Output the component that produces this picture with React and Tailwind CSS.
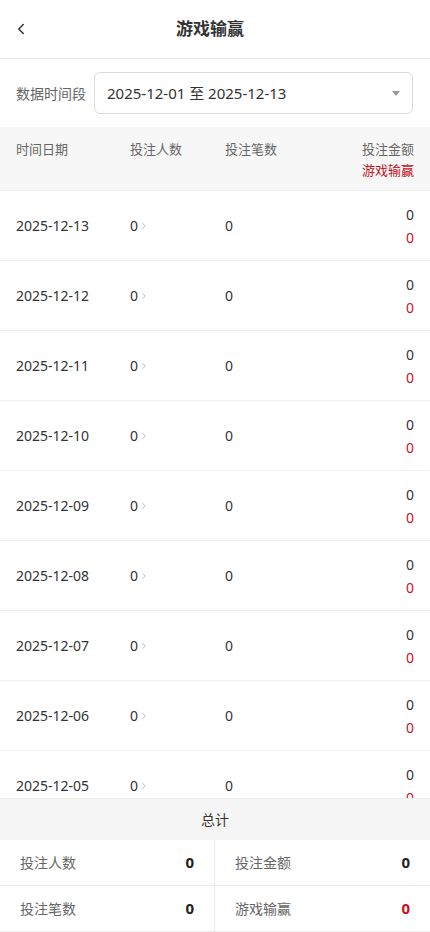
import { ChevronLeft, ChevronRight } from "lucide-react";

const days = [
  "2025-12-13",
  "2025-12-12",
  "2025-12-11",
  "2025-12-10",
  "2025-12-09",
  "2025-12-08",
  "2025-12-07",
  "2025-12-06",
  "2025-12-05",
  "2025-12-04",
];

function TotalCell({ label, value, red, left }) {
  return (
    <div
      className={`flex items-center justify-between h-[46px] px-5 border-b border-[#ececec] ${
        left ? "border-r" : ""
      }`}
    >
      <span className="text-[14px] text-[#666]">{label}</span>
      <span
        className={`text-[15px] font-bold ${red ? "text-[#c8101e]" : "text-[#222]"}`}
      >
        {value}
      </span>
    </div>
  );
}

export default function App() {
  return (
    <div
      className="h-[932px] w-full flex flex-col bg-white overflow-hidden"
      style={{ fontFamily: '"Noto Sans", "Noto Sans CJK SC", sans-serif' }}
    >
      {/* Header */}
      <div className="relative h-[59px] shrink-0 flex items-center justify-center pr-[10px] border-b border-[#ebebeb]">
        <ChevronLeft
          className="absolute left-[12px] top-[20px] text-[#333]"
          size={18}
          strokeWidth={2}
        />
        <h1 className="text-[17px] font-bold text-[#333]">游戏输赢</h1>
      </div>

      {/* Filter */}
      <div className="shrink-0 flex items-center h-[68px] pl-4 pr-[17px]">
        <span className="text-[14px] text-[#666] w-[78px] shrink-0">数据时间段</span>
        <div className="flex-1 h-[42px] flex items-center justify-between pl-[12px] pr-[12px] border border-[#dcdcdc] rounded-[6px]">
          <span className="text-[15px] text-[#333]">2025-12-01 至 2025-12-13</span>
          <span className="w-0 h-0 border-l-[4px] border-r-[4px] border-t-[5px] border-l-transparent border-r-transparent border-t-[#999]" />
        </div>
      </div>

      {/* Table header */}
      <div className="shrink-0 h-[64px] bg-[#f7f7f7] flex items-start px-4 pt-[12px] text-[13px] leading-[21px] text-[#666] border-b border-[#eeeeee]">
        <div className="w-[114px]">时间日期</div>
        <div className="w-[95px]">投注人数</div>
        <div className="flex-1">投注笔数</div>
        <div className="text-right">
          <div>投注金额</div>
          <div className="text-[#c8101e]">游戏输赢</div>
        </div>
      </div>

      {/* Rows */}
      <div className="flex-1 overflow-hidden">
        {days.map((d) => (
          <div
            key={d}
            className="h-[70px] flex items-center px-4 border-b border-[#eeeeee] text-[14px] text-[#333]"
          >
            <div className="w-[114px]">{d}</div>
            <div className="w-[95px] flex items-center">
              0
              <ChevronRight className="ml-[1px] text-[#aaa]" size={10} strokeWidth={2} />
            </div>
            <div className="flex-1">0</div>
            <div className="text-right leading-[23px]">
              <div>0</div>
              <div className="text-[#c8101e]">0</div>
            </div>
          </div>
        ))}
      </div>

      {/* Totals */}
      <div className="shrink-0 border-t border-[#ececec]">
        <div className="h-[41px] bg-[#f5f5f5] flex items-center justify-center text-[14px] text-[#333]">
          总计
        </div>
        <div className="grid grid-cols-2">
          <TotalCell label="投注人数" value="0" left />
          <TotalCell label="投注金额" value="0" />
          <TotalCell label="投注笔数" value="0" left />
          <TotalCell label="游戏输赢" value="0" red />
        </div>
      </div>
    </div>
  );
}
